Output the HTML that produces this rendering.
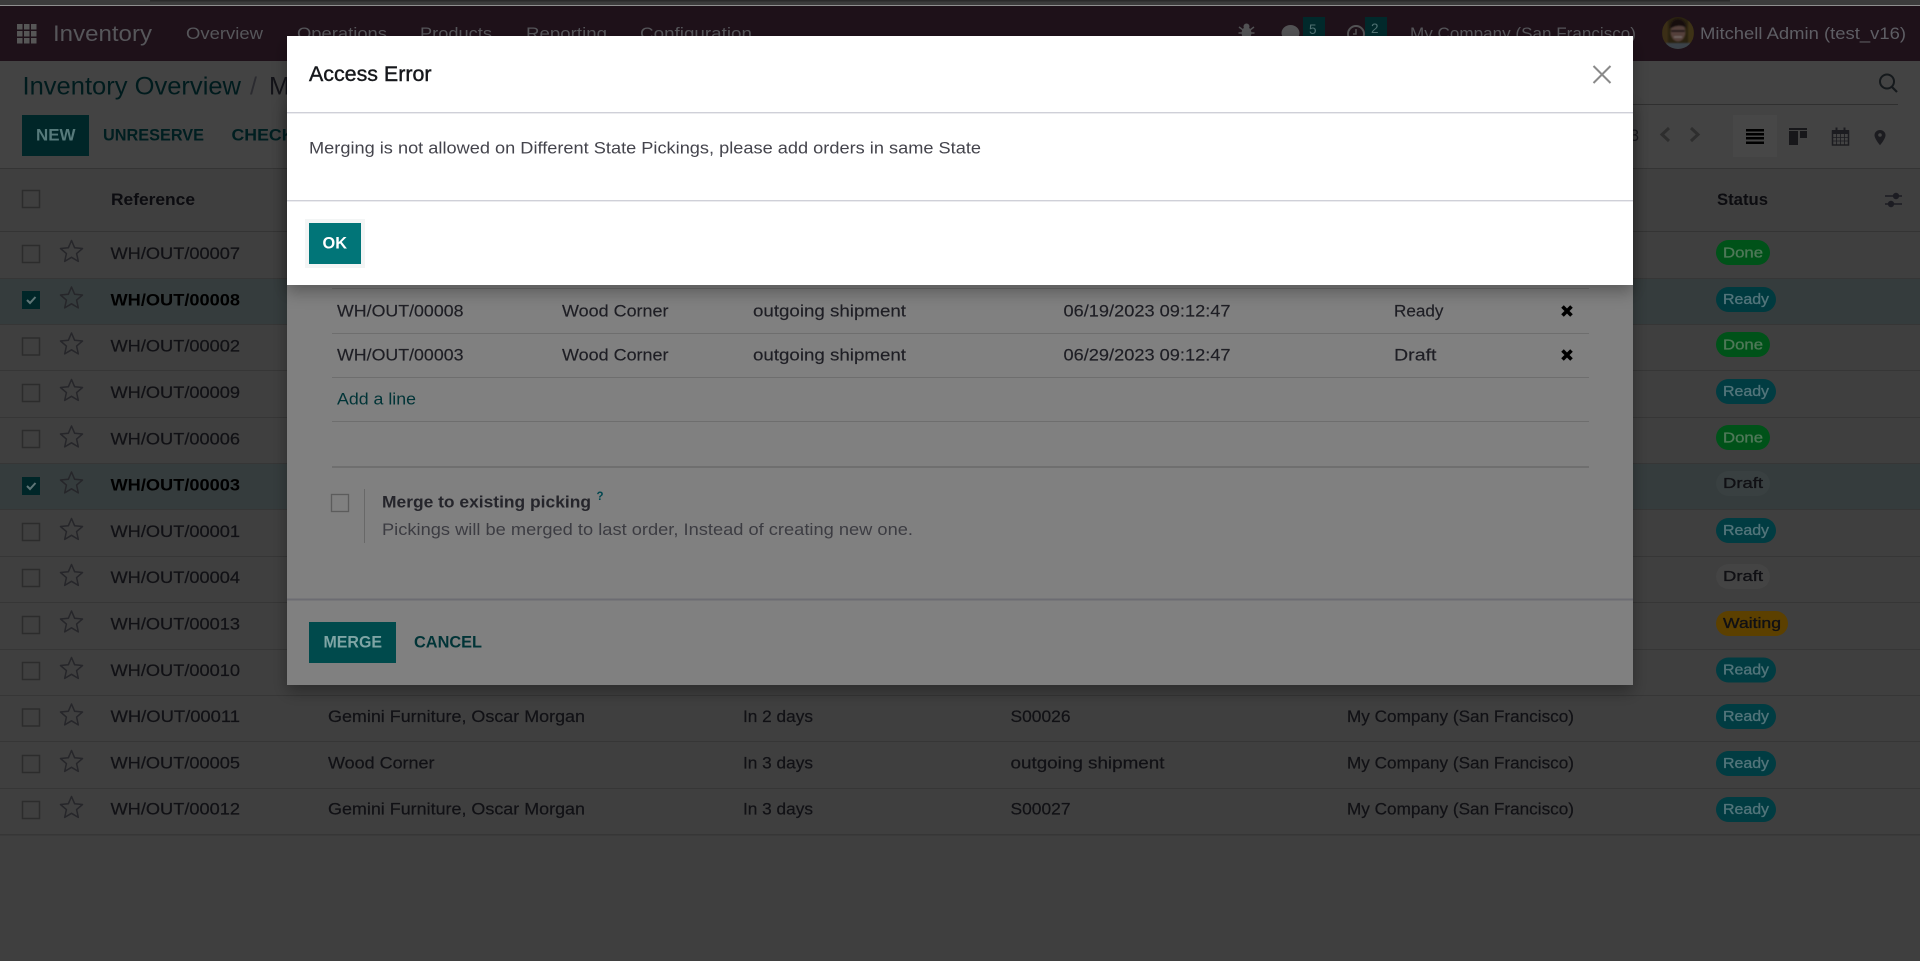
<!DOCTYPE html>
<html lang="en">
<head>
<meta charset="utf-8">
<title>Inventory - Access Error</title>
<style>
html,body{margin:0;padding:0;width:1920px;height:961px;overflow:hidden;background:#3f3f3f}
svg{display:block}
text{font-family:"Liberation Sans",sans-serif;white-space:pre}
.n{font-size:16.25px;fill:#56565a}
.r{font-size:16.25px;fill:#111115;stroke:#111115;stroke-width:.2px}
.b{font-size:16.25px;fill:#000;font-weight:bold}
.m{font-size:16.25px;fill:#1e1e24;stroke:#1e1e24;stroke-width:.15px}
.bd{font-size:15px}
.bd text{stroke-width:.35px;paint-order:stroke}
.g{fill:#4f7858;stroke:#4f7858}
.t{fill:#52747a;stroke:#52747a}
.k{fill:#101014;stroke:#101014}
.st{fill:none;stroke:#26262a;stroke-width:1.5;stroke-linejoin:round}
.cb{fill:none;stroke:#2c2c2c;stroke-width:1.4}
</style>
</head>
<body>
<svg xmlns="http://www.w3.org/2000/svg" width="1920" height="961" viewBox="0 0 1920 961">
<defs>
<filter id="sh" x="-5%" y="-15%" width="110%" height="135%">
<feDropShadow dx="0" dy="7" stdDeviation="8" flood-color="#000" flood-opacity=".3"/>
</filter>
<filter id="soft" x="-10%" y="-10%" width="120%" height="120%"><feGaussianBlur stdDeviation=".7"/></filter>
<clipPath id="av"><circle cx="1678" cy="33" r="16"/></clipPath>
<polygon id="star" points="0,-11.5 3.1,-4.3 11,-3.5 5.1,1.6 6.8,9.4 0,5.3 -6.8,9.4 -5.1,1.6 -11,-3.5 -3.1,-4.3"/>
</defs>

<!-- page background -->
<rect width="1920" height="961" fill="#3f3f3f"/>
<!-- browser strip -->
<rect width="1920" height="5" fill="#3c3c3c"/>
<rect x="150" width="1580" height="1.5" fill="#2a2a2a"/>
<rect y="5" width="1920" height="1" fill="#8f8f8f"/>
<!-- navbar -->
<rect y="6" width="1920" height="55" fill="#1e1119"/>
<g fill="#565656">
<rect x="17" y="24" width="5.5" height="5.5"/><rect x="24" y="24" width="5.5" height="5.5"/><rect x="31" y="24" width="5.5" height="5.5"/>
<rect x="17" y="31" width="5.5" height="5.5"/><rect x="24" y="31" width="5.5" height="5.5"/><rect x="31" y="31" width="5.5" height="5.5"/>
<rect x="17" y="38" width="5.5" height="5.5"/><rect x="24" y="38" width="5.5" height="5.5"/><rect x="31" y="38" width="5.5" height="5.5"/>
</g>
<text x="53" y="41" font-size="22.5" fill="#56565a" textLength="99" lengthAdjust="spacingAndGlyphs">Inventory</text>
<text class="n" x="186" y="39" textLength="77" lengthAdjust="spacingAndGlyphs">Overview</text>
<text class="n" x="297" y="39" textLength="90" lengthAdjust="spacingAndGlyphs">Operations</text>
<text class="n" x="420" y="39" textLength="72" lengthAdjust="spacingAndGlyphs">Products</text>
<text class="n" x="526" y="39" textLength="81" lengthAdjust="spacingAndGlyphs">Reporting</text>
<text class="n" x="640" y="39" textLength="112" lengthAdjust="spacingAndGlyphs">Configuration</text>
<!-- nav right -->
<g fill="#525254">
<ellipse cx="1246.5" cy="33" rx="5" ry="6"/><circle cx="1246.5" cy="26.5" r="3"/>
<path d="M1239 27l4 3M1254 27l-4 3M1238.5 33h5M1254.5 33h-5M1240 39l3-3M1253 39l-3-3" stroke="#525254" stroke-width="1.5" fill="none"/>
<ellipse cx="1290.5" cy="33" rx="9" ry="8"/>
</g>
<rect x="1303" y="17" width="22" height="20" fill="#01292b"/>
<text x="1309" y="34" font-size="13.5" fill="#4f7172">5</text>
<circle cx="1356" cy="34" r="8" fill="none" stroke="#525254" stroke-width="2"/>
<path d="M1356 29v5h-3" fill="none" stroke="#525254" stroke-width="1.5"/>
<rect x="1365" y="17" width="22" height="20" fill="#01292b"/>
<text x="1371" y="33" font-size="13.5" fill="#4f7172">2</text>
<text class="n" x="1410" y="39" textLength="226" lengthAdjust="spacingAndGlyphs">My Company (San Francisco)</text>
<!-- avatar -->
<g clip-path="url(#av)">
<rect x="1662" y="17" width="32" height="32" fill="#2a2211"/>
<g filter="url(#soft)">
<rect x="1662" y="17" width="6" height="32" fill="#3a2f14"/>
<rect x="1688" y="17" width="6" height="32" fill="#3c3012"/>
<ellipse cx="1678" cy="32" rx="7.5" ry="9.500" fill="#54403a"/>
<path d="M1670 29c0-7 4-10 8-10s8 3 8 9c-3-3-11-3-16 1z" fill="#120e0d"/>
<rect x="1671" y="30" width="14" height="2" fill="#1d1614"/>
<path d="M1674 37h8" stroke="#78706c" stroke-width="1.300" fill="none"/>
<rect x="1666" y="43" width="24" height="7" fill="#3a424a"/>
</g>
</g>
<text x="1700" y="39" font-size="16.5" fill="#5e5e64" textLength="206" lengthAdjust="spacingAndGlyphs">Mitchell Admin (test_v16)</text>

<!-- control panel -->
<rect y="61" width="1920" height="107" fill="#434343"/>
<rect y="168" width="1920" height="1" fill="#343434"/>
<text x="22.5" y="94.5" font-size="25" fill="#001b1d" textLength="218.5" lengthAdjust="spacingAndGlyphs">Inventory Overview</text>
<text x="250" y="94.5" font-size="25" fill="#2b2b30">/</text>
<text x="269" y="94.5" font-size="25" fill="#121217">M</text>
<rect x="22" y="115" width="67" height="41" fill="#002628"/>
<text x="36" y="140.5" font-size="16.25" font-weight="bold" fill="#567a7b" textLength="39.5" lengthAdjust="spacingAndGlyphs">NEW</text>
<text x="103" y="140.5" font-size="16.25" font-weight="bold" fill="#001e20" textLength="101" lengthAdjust="spacingAndGlyphs">UNRESERVE</text>
<text x="231.5" y="140.5" font-size="16.25" font-weight="bold" fill="#001e20" textLength="63" lengthAdjust="spacingAndGlyphs">CHECK</text>

<circle cx="1887" cy="81.5" r="7" fill="none" stroke="#15191c" stroke-width="2"/>
<path d="M1892 87l5 5" stroke="#15191c" stroke-width="2.2"/>
<rect x="1633" y="104" width="265" height="1" fill="#2f2f2f"/>
<text x="1630" y="141" font-size="16.25" fill="#1a1a1f">3</text>
<path d="M1669 128l-7 6.5 7 6.5M1691 128l7 6.5-7 6.5" fill="none" stroke="#2e2e2e" stroke-width="3"/>
<rect x="1733" y="115" width="44" height="42" fill="#474747"/>
<g fill="#000">
<rect x="1746" y="129" width="18" height="2.5"/><rect x="1746" y="133" width="18" height="2.5"/><rect x="1746" y="137" width="18" height="2.5"/><rect x="1746" y="141.5" width="18" height="2.5"/>
</g>
<g fill="#17171a">
<rect x="1789" y="128" width="18" height="2"/><rect x="1789" y="131" width="9" height="14"/><rect x="1800" y="131" width="7" height="7"/>
</g>
<rect x="1832.5" y="131" width="16" height="14" fill="none" stroke="#1c1c20" stroke-width="1.5"/>
<rect x="1832" y="130" width="17" height="4" fill="#1c1c20"/>
<path d="M1836.5 127.5v4M1844.5 127.5v4" stroke="#1c1c20" stroke-width="2"/>
<path d="M1832 137.5h17M1832 141h17M1836.5 134v11M1840.5 134v11M1844.5 134v11" stroke="#1c1c20" stroke-width=".8"/>
<path d="M1880 130c-3 0-5.5 2.2-5.5 5.2 0 3.5 5.5 10 5.5 10s5.5-6.5 5.5-10c0-3-2.5-5.2-5.5-5.2z" fill="#1c1c20"/>
<circle cx="1880" cy="135" r="1.8" fill="#434343"/>

<!-- list header -->
<rect x="22.5" y="190.5" width="17" height="17" class="cb"/>
<text x="111" y="205" font-size="16.25" font-weight="bold" fill="#0c0c10" textLength="84" lengthAdjust="spacingAndGlyphs">Reference</text>
<text x="1717" y="205" font-size="16.25" font-weight="bold" fill="#0c0c10" textLength="51" lengthAdjust="spacingAndGlyphs">Status</text>
<path d="M1885 196h17M1885 204h17" stroke="#1c1c22" stroke-width="1.5"/>
<circle cx="1896" cy="196" r="3.2" fill="#1c1c22"/><circle cx="1891" cy="204" r="3.2" fill="#1c1c22"/>
<rect y="231" width="1920" height="1" fill="#343434"/>

<!-- selected rows -->
<rect y="278" width="1920" height="46" fill="#353c3d"/>
<rect y="463" width="1920" height="46" fill="#353c3d"/>
<!-- separators -->
<g fill="#363636">
<rect y="278" width="1920" height="1"/><rect y="324" width="1920" height="1"/><rect y="370" width="1920" height="1"/><rect y="417" width="1920" height="1"/><rect y="463" width="1920" height="1"/><rect y="509" width="1920" height="1"/><rect y="556" width="1920" height="1"/><rect y="602" width="1920" height="1"/><rect y="649" width="1920" height="1"/><rect y="695" width="1920" height="1"/><rect y="741" width="1920" height="1"/><rect y="788" width="1920" height="1"/><rect y="834" width="1920" height="1.5"/>
</g>

<!-- row checkboxes -->
<g>
<rect x="22.5" y="245.5" width="17" height="17" class="cb"/>
<rect x="22" y="291" width="18" height="18" fill="#002628"/><path d="M27 300l3 3 5.5-6" fill="none" stroke="#5f7677" stroke-width="2"/>
<rect x="22.5" y="338" width="17" height="17" class="cb"/>
<rect x="22.5" y="384.5" width="17" height="17" class="cb"/>
<rect x="22.5" y="430.5" width="17" height="17" class="cb"/>
<rect x="22" y="477" width="18" height="18" fill="#002628"/><path d="M27 486l3 3 5.5-6" fill="none" stroke="#5f7677" stroke-width="2"/>
<rect x="22.5" y="523.5" width="17" height="17" class="cb"/>
<rect x="22.5" y="569.5" width="17" height="17" class="cb"/>
<rect x="22.5" y="616.5" width="17" height="17" class="cb"/>
<rect x="22.5" y="662.5" width="17" height="17" class="cb"/>
<rect x="22.5" y="709" width="17" height="17" class="cb"/>
<rect x="22.5" y="755.5" width="17" height="17" class="cb"/>
<rect x="22.5" y="801.5" width="17" height="17" class="cb"/>
</g>
<!-- stars -->
<g class="st" transform="translate(0,1.5)">
<use href="#star" x="71.5" y="250.5"/><use href="#star" x="71.5" y="297"/><use href="#star" x="71.5" y="343"/><use href="#star" x="71.5" y="389.5"/><use href="#star" x="71.5" y="436"/><use href="#star" x="71.5" y="482"/><use href="#star" x="71.5" y="528.5"/><use href="#star" x="71.5" y="574.5"/><use href="#star" x="71.5" y="621"/><use href="#star" x="71.5" y="667.5"/><use href="#star" x="71.5" y="714"/><use href="#star" x="71.5" y="760.5"/><use href="#star" x="71.5" y="806.5"/>
</g>
<!-- row references -->
<g transform="translate(0,-.7)">
<text class="r" x="110.5" y="259.5" textLength="129.5" lengthAdjust="spacingAndGlyphs">WH/OUT/00007</text>
<text class="b" x="110.5" y="306" textLength="129.5" lengthAdjust="spacingAndGlyphs">WH/OUT/00008</text>
<text class="r" x="110.5" y="352" textLength="129.5" lengthAdjust="spacingAndGlyphs">WH/OUT/00002</text>
<text class="r" x="110.5" y="398.5" textLength="129.5" lengthAdjust="spacingAndGlyphs">WH/OUT/00009</text>
<text class="r" x="110.5" y="445" textLength="129.5" lengthAdjust="spacingAndGlyphs">WH/OUT/00006</text>
<text class="b" x="110.5" y="491" textLength="129.5" lengthAdjust="spacingAndGlyphs">WH/OUT/00003</text>
<text class="r" x="110.5" y="537.5" textLength="129.5" lengthAdjust="spacingAndGlyphs">WH/OUT/00001</text>
<text class="r" x="110.5" y="583.5" textLength="129.5" lengthAdjust="spacingAndGlyphs">WH/OUT/00004</text>
<text class="r" x="110.5" y="630" textLength="129.5" lengthAdjust="spacingAndGlyphs">WH/OUT/00013</text>
<text class="r" x="110.5" y="676.5" textLength="129.5" lengthAdjust="spacingAndGlyphs">WH/OUT/00010</text>
<text class="r" x="110.5" y="722.5" textLength="129.5" lengthAdjust="spacingAndGlyphs">WH/OUT/00011</text>
<text class="r" x="110.5" y="769" textLength="129.5" lengthAdjust="spacingAndGlyphs">WH/OUT/00005</text>
<text class="r" x="110.5" y="815" textLength="129.5" lengthAdjust="spacingAndGlyphs">WH/OUT/00012</text>
<!-- lower rows -->
<text class="r" x="328" y="722.5" textLength="257" lengthAdjust="spacingAndGlyphs">Gemini Furniture, Oscar Morgan</text>
<text class="r" x="328" y="769" textLength="106.5" lengthAdjust="spacingAndGlyphs">Wood Corner</text>
<text class="r" x="328" y="815" textLength="257" lengthAdjust="spacingAndGlyphs">Gemini Furniture, Oscar Morgan</text>
<text class="r" x="743" y="722.5" textLength="70" lengthAdjust="spacingAndGlyphs">In 2 days</text>
<text class="r" x="743" y="769" textLength="70" lengthAdjust="spacingAndGlyphs">In 3 days</text>
<text class="r" x="743" y="815" textLength="70" lengthAdjust="spacingAndGlyphs">In 3 days</text>
<text class="r" x="1010.5" y="722.5" textLength="60" lengthAdjust="spacingAndGlyphs">S00026</text>
<text class="r" x="1010.5" y="769" textLength="154" lengthAdjust="spacingAndGlyphs">outgoing shipment</text>
<text class="r" x="1010.5" y="815" textLength="60" lengthAdjust="spacingAndGlyphs">S00027</text>
<text class="r" x="1347" y="722.5" textLength="227" lengthAdjust="spacingAndGlyphs">My Company (San Francisco)</text>
<text class="r" x="1347" y="769" textLength="227" lengthAdjust="spacingAndGlyphs">My Company (San Francisco)</text>
<text class="r" x="1347" y="815" textLength="227" lengthAdjust="spacingAndGlyphs">My Company (San Francisco)</text>
</g>

<!-- status badges -->
<g class="bd">
<rect x="1716" y="240" width="54" height="25" rx="12.5" fill="#005219"/><text class="g" x="1723" y="257.5" textLength="40" lengthAdjust="spacingAndGlyphs">Done</text>
<rect x="1716" y="287" width="60" height="25" rx="12.5" fill="#003a3f"/><text class="t" x="1723" y="304" textLength="46" lengthAdjust="spacingAndGlyphs">Ready</text>
<rect x="1716" y="332" width="54" height="25" rx="12.5" fill="#005219"/><text class="g" x="1723" y="349.5" textLength="40" lengthAdjust="spacingAndGlyphs">Done</text>
<rect x="1716" y="379" width="60" height="25" rx="12.5" fill="#013c42"/><text class="t" x="1723" y="396" textLength="46" lengthAdjust="spacingAndGlyphs">Ready</text>
<rect x="1716" y="425" width="54" height="25" rx="12.5" fill="#005219"/><text class="g" x="1723" y="442.5" textLength="40" lengthAdjust="spacingAndGlyphs">Done</text>
<rect x="1716" y="471" width="54" height="25" rx="12.5" fill="#394041"/><text class="k" x="1723" y="488" textLength="40" lengthAdjust="spacingAndGlyphs">Draft</text>
<rect x="1716" y="518" width="60" height="25" rx="12.5" fill="#013c42"/><text class="t" x="1723" y="535" textLength="46" lengthAdjust="spacingAndGlyphs">Ready</text>
<rect x="1716" y="564" width="54" height="25" rx="12.5" fill="#444"/><text class="k" x="1723" y="581" textLength="40" lengthAdjust="spacingAndGlyphs">Draft</text>
<rect x="1716" y="611" width="72" height="25" rx="12.5" fill="#5c4000"/><text class="k" x="1723" y="628" textLength="58" lengthAdjust="spacingAndGlyphs">Waiting</text>
<rect x="1716" y="657.5" width="60" height="25" rx="12.5" fill="#013c42"/><text class="t" x="1723" y="674.5" textLength="46" lengthAdjust="spacingAndGlyphs">Ready</text>
<rect x="1716" y="704" width="60" height="25" rx="12.5" fill="#013c42"/><text class="t" x="1723" y="721" textLength="46" lengthAdjust="spacingAndGlyphs">Ready</text>
<rect x="1716" y="751" width="60" height="25" rx="12.5" fill="#013c42"/><text class="t" x="1723" y="768" textLength="46" lengthAdjust="spacingAndGlyphs">Ready</text>
<rect x="1716" y="797" width="60" height="25" rx="12.5" fill="#013c42"/><text class="t" x="1723" y="814" textLength="46" lengthAdjust="spacingAndGlyphs">Ready</text>
</g>

<!-- merge dialog (under one backdrop) -->
<rect x="287" y="100" width="1346" height="585" fill="#808080" filter="url(#sh)"/>
<g fill="#6e6e6e">
<rect x="332" y="288" width="1257" height="1"/><rect x="332" y="333" width="1257" height="1"/><rect x="332" y="377" width="1257" height="1"/><rect x="332" y="421" width="1257" height="1"/>
</g>
<rect x="332" y="466" width="1257" height="2" fill="#6f6f6f"/>
<rect x="287" y="598.5" width="1346" height="2" fill="#6c6c72"/>
<text class="m" x="337" y="316.5" textLength="126.5" lengthAdjust="spacingAndGlyphs">WH/OUT/00008</text>
<text class="m" x="562" y="316.5" textLength="106.5" lengthAdjust="spacingAndGlyphs">Wood Corner</text>
<text class="m" x="753" y="316.5" textLength="153" lengthAdjust="spacingAndGlyphs">outgoing shipment</text>
<text class="m" x="1063.5" y="316.5" textLength="167" lengthAdjust="spacingAndGlyphs">06/19/2023 09:12:47</text>
<text class="m" x="1394" y="316.5" textLength="49.5" lengthAdjust="spacingAndGlyphs">Ready</text>
<path d="M1562.5 306.5l9 9M1571.5 306.5l-9 9" stroke="#000" stroke-width="3.6"/>
<text class="m" x="337" y="360.5" textLength="126.5" lengthAdjust="spacingAndGlyphs">WH/OUT/00003</text>
<text class="m" x="562" y="360.5" textLength="106.5" lengthAdjust="spacingAndGlyphs">Wood Corner</text>
<text class="m" x="753" y="360.5" textLength="153" lengthAdjust="spacingAndGlyphs">outgoing shipment</text>
<text class="m" x="1063.5" y="360.5" textLength="167" lengthAdjust="spacingAndGlyphs">06/29/2023 09:12:47</text>
<text class="m" x="1394" y="360.5" textLength="42.5" lengthAdjust="spacingAndGlyphs">Draft</text>
<path d="M1562.5 350.5l9 9M1571.5 350.5l-9 9" stroke="#000" stroke-width="3.6"/>
<text x="337" y="404.5" font-size="16.25" fill="#013437" textLength="79" lengthAdjust="spacingAndGlyphs">Add a line</text>
<rect x="331.5" y="494.5" width="17" height="17" fill="none" stroke="#5c5c5c" stroke-width="1.3"/>
<rect x="364" y="489" width="1" height="54" fill="#686868"/>
<text x="382" y="507.5" font-size="16.25" font-weight="bold" fill="#25252b" textLength="209" lengthAdjust="spacingAndGlyphs">Merge to existing picking</text>
<text x="596.5" y="500" font-size="11.5" font-weight="bold" fill="#01464f">?</text>
<text x="382" y="535" font-size="16.25" fill="#3c3c42" textLength="531" lengthAdjust="spacingAndGlyphs">Pickings will be merged to last order, Instead of creating new one.</text>
<rect x="309" y="622" width="87" height="41" fill="#004a4c"/>
<text x="323.5" y="647.5" font-size="16.25" font-weight="bold" fill="#7fa5a5" textLength="58.5" lengthAdjust="spacingAndGlyphs">MERGE</text>
<text x="414" y="647.5" font-size="16.25" font-weight="bold" fill="#013437" textLength="68" lengthAdjust="spacingAndGlyphs">CANCEL</text>

<!-- access error dialog -->
<rect x="287" y="36" width="1346" height="249" fill="#fff" filter="url(#sh)"/>
<rect x="287" y="112" width="1346" height="1.4" fill="#cfd0d8"/>
<rect x="287" y="200" width="1346" height="1.4" fill="#cfd0d8"/>
<text x="309" y="81" font-size="21" fill="#16181c" stroke="#16181c" stroke-width=".4" textLength="122.5" lengthAdjust="spacingAndGlyphs">Access Error</text>
<path d="M1593.5 66l17 17M1610.5 66l-17 17" stroke="#8a8a8a" stroke-width="2" fill="none"/>
<text x="309" y="153.5" font-size="16.25" fill="#44444c" textLength="672" lengthAdjust="spacingAndGlyphs">Merging is not allowed on Different State Pickings, please add orders in same State</text>
<rect x="305" y="219" width="60" height="49" fill="#f3f5f5"/>
<rect x="309" y="223" width="52" height="41" fill="#017578"/>
<text x="322.5" y="248.5" font-size="16.5" font-weight="bold" fill="#fff" textLength="24.5" lengthAdjust="spacingAndGlyphs">OK</text>
</svg>
</body>
</html>
